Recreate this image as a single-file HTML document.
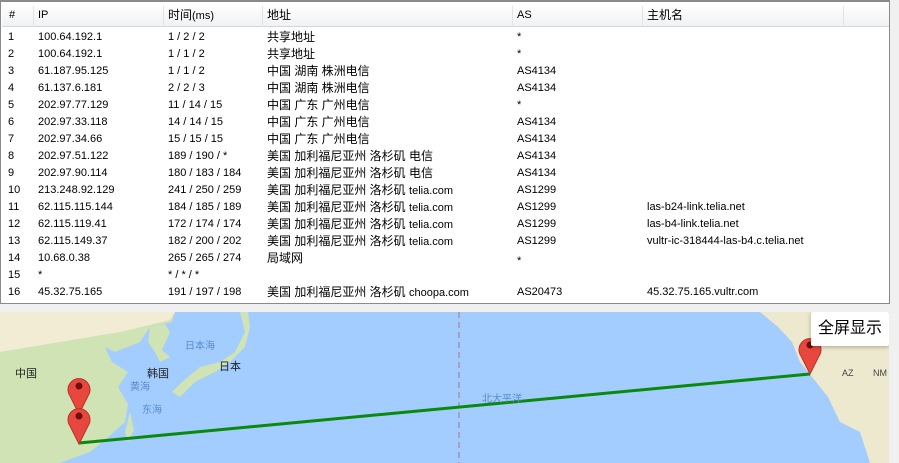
<!DOCTYPE html>
<html><head><meta charset="utf-8"><style>
*{margin:0;padding:0;box-sizing:border-box}
body{width:899px;height:463px;background:#f0f0f0;position:relative;overflow:hidden;font-family:"Liberation Sans","Noto Sans CJK SC",sans-serif;font-size:11px;color:#000}
#frame{position:absolute;left:0;top:0;width:890px;height:304px;border:1px solid #8a8a8a;border-top:2px solid #8a8a8a;background:#fff}
#hdr{position:absolute;left:1px;top:2px;width:887px;height:23px;background:linear-gradient(#fff,#f1f2f4);border-bottom:1px solid #d5d5d5}
.sep{position:absolute;top:2px;width:1px;height:21px;background:#e3e3e3}
.c{position:absolute;white-space:nowrap;line-height:17px}
.h{top:5px;line-height:17px;font-size:11px}
.z{font-size:12px}
#map{position:absolute;left:0;top:312px;width:889px;height:151px;background:#a3ccff;overflow:hidden}
</style></head><body>
<div id="frame">
<div id="hdr">
<div class="sep" style="left:31px"></div><div class="sep" style="left:161px"></div><div class="sep" style="left:260px"></div><div class="sep" style="left:510px"></div><div class="sep" style="left:640px"></div><div class="sep" style="left:841px"></div>
</div>
<div class="c h" style="left:8px">#</div><div class="c h" style="left:37px">IP</div><div class="c h z" style="left:167px">时间<span style="font-size:11px">(ms)</span></div><div class="c h z" style="left:266px">地址</div><div class="c h" style="left:516px">AS</div><div class="c h z" style="left:646px">主机名</div>
<div style="position:absolute;left:0;top:27px">
<div class="c" style="top:0;left:7px">1</div><div class="c" style="top:0;left:37px">100.64.192.1</div><div class="c" style="top:0;left:167px">1 / 2 / 2</div><div class="c z" style="top:0;left:266px">共享地址</div><div class="c" style="top:0;left:516px">*</div>
<div class="c" style="top:17px;left:7px">2</div><div class="c" style="top:17px;left:37px">100.64.192.1</div><div class="c" style="top:17px;left:167px">1 / 1 / 2</div><div class="c z" style="top:17px;left:266px">共享地址</div><div class="c" style="top:17px;left:516px">*</div>
<div class="c" style="top:34px;left:7px">3</div><div class="c" style="top:34px;left:37px">61.187.95.125</div><div class="c" style="top:34px;left:167px">1 / 1 / 2</div><div class="c z" style="top:34px;left:266px">中国 湖南 株洲电信</div><div class="c" style="top:34px;left:516px">AS4134</div>
<div class="c" style="top:51px;left:7px">4</div><div class="c" style="top:51px;left:37px">61.137.6.181</div><div class="c" style="top:51px;left:167px">2 / 2 / 3</div><div class="c z" style="top:51px;left:266px">中国 湖南 株洲电信</div><div class="c" style="top:51px;left:516px">AS4134</div>
<div class="c" style="top:68px;left:7px">5</div><div class="c" style="top:68px;left:37px">202.97.77.129</div><div class="c" style="top:68px;left:167px">11 / 14 / 15</div><div class="c z" style="top:68px;left:266px">中国 广东 广州电信</div><div class="c" style="top:68px;left:516px">*</div>
<div class="c" style="top:85px;left:7px">6</div><div class="c" style="top:85px;left:37px">202.97.33.118</div><div class="c" style="top:85px;left:167px">14 / 14 / 15</div><div class="c z" style="top:85px;left:266px">中国 广东 广州电信</div><div class="c" style="top:85px;left:516px">AS4134</div>
<div class="c" style="top:102px;left:7px">7</div><div class="c" style="top:102px;left:37px">202.97.34.66</div><div class="c" style="top:102px;left:167px">15 / 15 / 15</div><div class="c z" style="top:102px;left:266px">中国 广东 广州电信</div><div class="c" style="top:102px;left:516px">AS4134</div>
<div class="c" style="top:119px;left:7px">8</div><div class="c" style="top:119px;left:37px">202.97.51.122</div><div class="c" style="top:119px;left:167px">189 / 190 / *</div><div class="c z" style="top:119px;left:266px">美国 加利福尼亚州 洛杉矶 电信</div><div class="c" style="top:119px;left:516px">AS4134</div>
<div class="c" style="top:136px;left:7px">9</div><div class="c" style="top:136px;left:37px">202.97.90.114</div><div class="c" style="top:136px;left:167px">180 / 183 / 184</div><div class="c z" style="top:136px;left:266px">美国 加利福尼亚州 洛杉矶 电信</div><div class="c" style="top:136px;left:516px">AS4134</div>
<div class="c" style="top:153px;left:7px">10</div><div class="c" style="top:153px;left:37px">213.248.92.129</div><div class="c" style="top:153px;left:167px">241 / 250 / 259</div><div class="c z" style="top:153px;left:266px">美国 加利福尼亚州 洛杉矶 <span style="font-size:11px">telia.com</span></div><div class="c" style="top:153px;left:516px">AS1299</div>
<div class="c" style="top:170px;left:7px">11</div><div class="c" style="top:170px;left:37px">62.115.115.144</div><div class="c" style="top:170px;left:167px">184 / 185 / 189</div><div class="c z" style="top:170px;left:266px">美国 加利福尼亚州 洛杉矶 <span style="font-size:11px">telia.com</span></div><div class="c" style="top:170px;left:516px">AS1299</div><div class="c" style="top:170px;left:646px">las-b24-link.telia.net</div>
<div class="c" style="top:187px;left:7px">12</div><div class="c" style="top:187px;left:37px">62.115.119.41</div><div class="c" style="top:187px;left:167px">172 / 174 / 174</div><div class="c z" style="top:187px;left:266px">美国 加利福尼亚州 洛杉矶 <span style="font-size:11px">telia.com</span></div><div class="c" style="top:187px;left:516px">AS1299</div><div class="c" style="top:187px;left:646px">las-b4-link.telia.net</div>
<div class="c" style="top:204px;left:7px">13</div><div class="c" style="top:204px;left:37px">62.115.149.37</div><div class="c" style="top:204px;left:167px">182 / 200 / 202</div><div class="c z" style="top:204px;left:266px">美国 加利福尼亚州 洛杉矶 <span style="font-size:11px">telia.com</span></div><div class="c" style="top:204px;left:516px">AS1299</div><div class="c" style="top:204px;left:646px">vultr-ic-318444-las-b4.c.telia.net</div>
<div class="c" style="top:221px;left:7px">14</div><div class="c" style="top:221px;left:37px">10.68.0.38</div><div class="c" style="top:221px;left:167px">265 / 265 / 274</div><div class="c z" style="top:221px;left:266px">局域网</div><div class="c" style="top:224px;left:516px">*</div>
<div class="c" style="top:238px;left:7px">15</div><div class="c" style="top:238px;left:37px">*</div><div class="c" style="top:238px;left:167px">* / * / *</div>
<div class="c" style="top:255px;left:7px">16</div><div class="c" style="top:255px;left:37px">45.32.75.165</div><div class="c" style="top:255px;left:167px">191 / 197 / 198</div><div class="c z" style="top:255px;left:266px">美国 加利福尼亚州 洛杉矶 <span style="font-size:11px">choopa.com</span></div><div class="c" style="top:255px;left:516px">AS20473</div><div class="c" style="top:255px;left:646px">45.32.75.165.vultr.com</div>
</div>
</div>
<div id="map">
<svg width="889" height="151" viewBox="0 0 889 151" style="position:absolute;left:0;top:0">
<path d="M0,0 L175,0 L172,10 L150,15 L140,30 L115,40 L105,35 L112,50 L128,60 L118,75 L128,92 L125,110 L105,128 L90,140 L60,151 L0,151 Z" fill="#cfe3b5"/>
<path d="M0,0 L175,0 L170,8 L120,20 L60,30 L0,40 Z" fill="#f1ecd3"/>
<path d="M150,15 L165,12 L170,20 L162,38 L170,45 L160,50 L155,40 L148,30 Z" fill="#cfe3b5"/>
<path d="M240,0 L245,20 L235,40 L220,50 L200,55 L182,70 L172,80 L180,85 L195,70 L215,60 L230,50 L245,35 L250,15 L248,0 Z" fill="#cfe3b5"/>
<path d="M125,120 L130,100 L134,118 L128,130 Z" fill="#cfe3b5"/>
<path d="M760,0 L889,0 L889,151 L870,151 L860,120 L840,110 L828,85 L812,65 L800,50 L792,30 L778,15 Z" fill="#ede9cf"/>
<path d="M459,0 L459,151" stroke="#a8a0bf" stroke-width="2" stroke-dasharray="6,4"/>
<path d="M79,131 L810,62" stroke="#0a8a0a" stroke-width="3" fill="none"/>
<g fill="#e8473d" stroke="#b63229" stroke-width="1">
<path d="M79,102 L70,84 A11,11 0 1 1 88,84 Z"/>
<path d="M79,132 L70,114 A11,11 0 1 1 88,114 Z"/>
<path d="M810,62 L801,44 A11,11 0 1 1 819,44 Z"/>
</g>
<circle cx="79" cy="74" r="3.5" fill="#6a1010"/><circle cx="79" cy="104" r="3.5" fill="#6a1010"/><circle cx="810" cy="33" r="3.5" fill="#6a1010"/>
<g font-family="Liberation Sans,Noto Sans CJK SC,sans-serif" font-size="11">
<text x="15" y="65" fill="#222">中国</text><text x="147" y="65" fill="#222">韩国</text><text x="219" y="58" fill="#222">日本</text>
<text x="185" y="37" fill="#5b8bcf" font-size="10">日本海</text><text x="130" y="78" fill="#5b8bcf" font-size="10">黄海</text><text x="142" y="101" fill="#5b8bcf" font-size="10">东海</text><text x="482" y="90" fill="#5b8bcf" font-size="10">北大平洋</text>
<text x="842" y="64" fill="#444" font-size="9">AZ</text><text x="873" y="64" fill="#444" font-size="9">NM</text>
</g>
</svg>
<div style="position:absolute;left:811px;top:0;width:78px;height:34px;background:#fff;border-radius:2px;box-shadow:0 1px 4px rgba(0,0,0,.3);font-size:16px;line-height:34px;text-align:center;color:#000">全屏显示</div>
</div>
</body></html>
